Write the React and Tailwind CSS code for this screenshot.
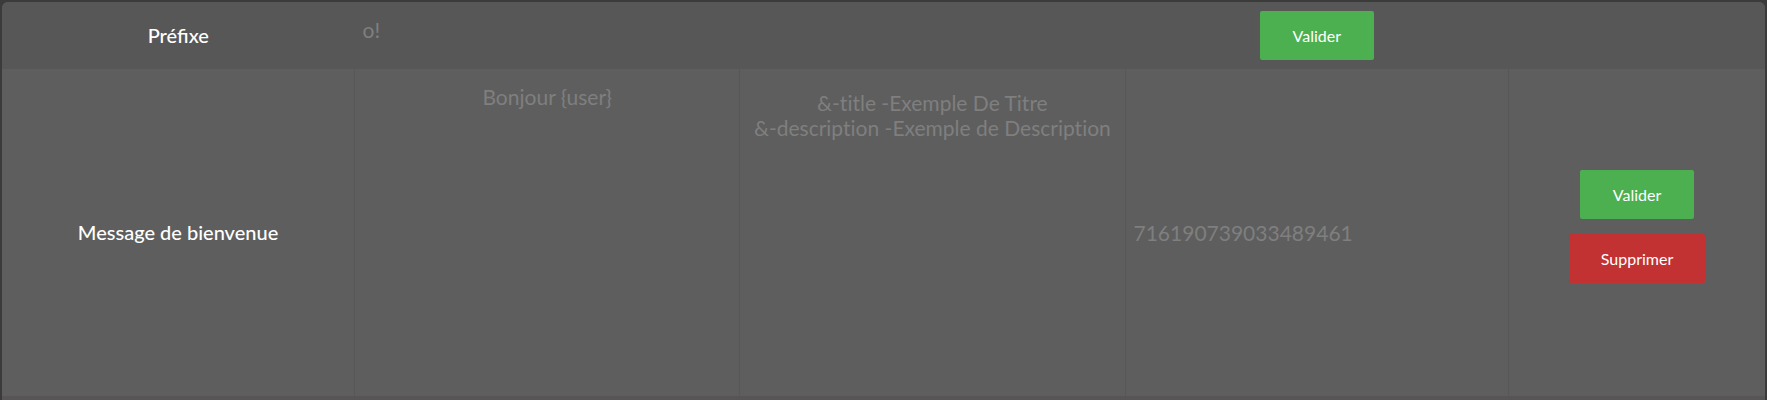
const fieldBase =
  'block w-full resize-none border-0 bg-transparent text-[21px] leading-[25px] text-white outline-none [font-variant-ligatures:none] placeholder:text-[#7f7f7f] placeholder:opacity-100';

const buttonBase = 'rounded-xs px-8 py-[15px] text-[16px] leading-[19px] text-white';

function ValidateButton() {
  return (
    <button type="submit" className={`${buttonBase} min-w-[114px] bg-[#4caf50]`}>
      Valider
    </button>
  );
}

export default function App() {
  return (
    <main className="bg-[#3b3b3b] p-0.5 font-['Lato',sans-serif]">
      <div className="overflow-hidden rounded-t-md bg-[#575555] pb-1">
        <table className="w-full table-fixed border-collapse text-center text-white">
          <colgroup>
            <col className="w-[20%]" />
            <col className="w-[21.85%]" />
            <col className="w-[21.85%]" />
            <col className="w-[21.76%]" />
            <col className="w-[14.54%]" />
          </colgroup>
          <tbody>
            <tr className="h-[67px] bg-[#575757]">
              <th scope="row" className="pb-0.5 text-[20px] leading-6 font-medium">
                <label htmlFor="prefix">Préfixe</label>
              </th>
              <td className="px-2 pt-[15px] align-top">
                <input id="prefix" type="text" placeholder="o!" className={fieldBase} />
              </td>
              <td />
              <td>
                <ValidateButton />
              </td>
              <td />
            </tr>
            <tr className="h-[327px] bg-[#5e5e5e]">
              <th scope="row" className="pb-0.5 text-[20px] leading-6 font-medium">
                <label htmlFor="welcome">Message de bienvenue</label>
              </th>
              <td className="border-l border-[#575757] px-2 pt-[15px] align-top">
                <textarea
                  id="welcome"
                  rows={11}
                  placeholder="Bonjour {user}"
                  className={`${fieldBase} text-center`}
                />
              </td>
              <td className="border-l border-[#575757] px-2 pt-[21px] align-top">
                <textarea
                  aria-label="Embed"
                  rows={11}
                  placeholder={'&-title -Exemple De Titre\n&-description -Exemple de Description'}
                  className={`${fieldBase} text-center`}
                />
              </td>
              <td className="border-l border-[#575757] px-2">
                <input
                  type="text"
                  aria-label="Salon"
                  placeholder="716190739033489461"
                  className={fieldBase}
                />
              </td>
              <td className="border-l border-[#575757] pb-3">
                <div className="flex flex-col items-center gap-[15px]">
                  <ValidateButton />
                  <button type="button" className={`${buttonBase} bg-[#c23232]`}>
                    Supprimer
                  </button>
                </div>
              </td>
            </tr>
          </tbody>
        </table>
      </div>
    </main>
  );
}
